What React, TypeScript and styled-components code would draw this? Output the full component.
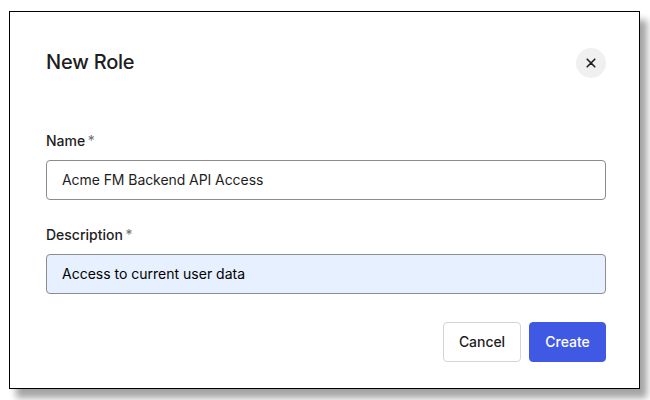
import React from "react";
import styled, { createGlobalStyle } from "styled-components";

const GlobalStyle = createGlobalStyle`
  * { box-sizing: border-box; }
  body { margin: 0; background: #fff; font-family: Inter, "Liberation Sans", sans-serif; color: #1e1e1e; overflow: hidden; }
`;

const Page = styled.main`
  width: 650px;
  height: 400px;
  padding: 11px 0 0 9px;
  overflow: hidden;
`;

const Dialog = styled.section`
  width: 631px;
  height: 378px;
  padding: 36px 33px 0 36px;
  border: 1px solid #000;
  background: #fff;
  box-shadow: 7px 9px 7px rgba(0, 0, 0, 0.36);
`;

const Header = styled.header`
  display: flex;
  justify-content: space-between;
  align-items: center;
  height: 30px;
`;

const Title = styled.h1`
  margin: 0 0 2px;
  font-size: 20px;
  line-height: 28px;
  font-weight: 500;
  letter-spacing: -0.2px;
`;

const CloseButton = styled.button`
  display: grid;
  place-items: center;
  width: 30px;
  height: 30px;
  padding: 0;
  border: 0;
  border-radius: 50%;
  background: #f0f0f0;
  color: #1e1e1e;
`;

const Form = styled.form`
  display: flex;
  flex-direction: column;
  gap: 24px;
  margin-top: 52px;
`;

const Field = styled.label`
  display: flex;
  flex-direction: column;
  gap: 9px;
`;

const Label = styled.span`
  font-size: 14px;
  line-height: 21px;
  font-weight: 500;
`;

const Required = styled.span`
  margin-left: 2.5px;
  font-weight: 400;
  color: #6f6f6f;
`;

const Input = styled.input<{ $filled?: boolean }>`
  width: 560px;
  height: 40px;
  padding: 0 15px 2px;
  border: 1px solid #8c8c8c;
  border-radius: 4px;
  background: ${(p) => (p.$filled ? "#e6f0fe" : "#fff")};
  color: ${(p) => (p.$filled ? "#000" : "#1e1e1e")};
  font: 400 14px Inter, sans-serif;
  letter-spacing: ${(p) => (p.$filled ? "0" : "-0.07px")};
`;

const Footer = styled.footer`
  display: flex;
  justify-content: flex-end;
  gap: 8px;
  margin-top: 4px;
`;

const Button = styled.button<{ $primary?: boolean }>`
  width: ${(p) => (p.$primary ? 77 : 78)}px;
  height: 40px;
  padding: 0 0 2px;
  border: 1px solid ${(p) => (p.$primary ? "#3f59e4" : "#d5d5d6")};
  border-radius: 4px;
  background: ${(p) => (p.$primary ? "#3f59e4" : "#fff")};
  color: ${(p) => (p.$primary ? "#fff" : "#1e1e1e")};
  font: 500 14px Inter, sans-serif;
  letter-spacing: -0.05px;
`;

export default function App() {
  return (
    <Page>
      <GlobalStyle />
      <Dialog>
        <Header>
          <Title>New Role</Title>
          <CloseButton aria-label="Close">
            <svg width="10" height="10" viewBox="0 0 10 10" fill="none" stroke="currentColor" strokeWidth="1.6" strokeLinecap="round">
              <path d="M1.2 1.2l7.6 7.6M8.8 1.2L1.2 8.8" />
            </svg>
          </CloseButton>
        </Header>
        <Form>
          <Field>
            <Label>Name<Required>*</Required></Label>
            <Input defaultValue="Acme FM Backend API Access" />
          </Field>
          <Field>
            <Label>Description<Required>*</Required></Label>
            <Input $filled defaultValue="Access to current user data" />
          </Field>
          <Footer>
            <Button type="button">Cancel</Button>
            <Button type="button" $primary>Create</Button>
          </Footer>
        </Form>
      </Dialog>
    </Page>
  );
}
